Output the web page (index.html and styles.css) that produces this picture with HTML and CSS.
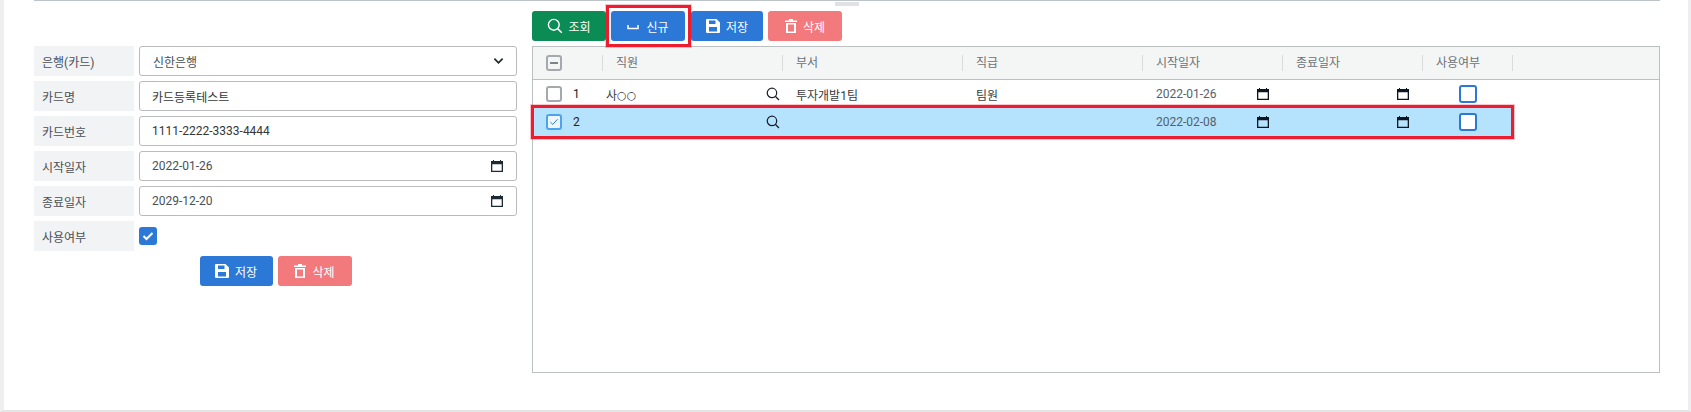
FILE: index.html
```html
<!DOCTYPE html>
<html lang="ko">
<head>
<meta charset="utf-8">
<title>카드등록</title>
<link rel="stylesheet" href="styles.css">
</head>
<body>
<svg class="sprites" aria-hidden="true">
  <symbol id="i-search" viewBox="0 0 16 16"><circle cx="6.800" cy="6.800" r="5.400" fill="none" stroke="currentColor" stroke-width="1.400"/><path d="M10.600 10.600 14.800 14.800" fill="none" stroke="currentColor" stroke-width="1.500"/></symbol>
  <symbol id="i-save" viewBox="0 0 14 14"><path fill="currentColor" fill-rule="evenodd" d="M1 0H10.500L14 3.500V13a1 1 0 0 1-1 1H1a1 1 0 0 1-1-1V1a1 1 0 0 1 1-1ZM3 1.500V5h6.500V1.500ZM3 8v4.500h8V8Z"/></symbol>
  <symbol id="i-trash" viewBox="0 0 12 14"><path fill="currentColor" fill-rule="evenodd" d="M4 0h4v1.500h4V3H0V1.500h4ZM1 4h10v10H1ZM3 5.500V12.500h6V5.500Z"/></symbol>
  <symbol id="i-cal" viewBox="0 0 12 12"><path fill="currentColor" fill-rule="evenodd" d="M2 0h1v1h6V0h1v1h2v11H0V1h2ZM1.300 4.200v6.500h9.400V4.200Z"/></symbol>
</svg>

<div class="page">
  <div class="top-rule"></div>
  <div class="splitter"></div>

  <div class="content">
    <section class="form">
      <div class="field"><div class="label">은행(카드)</div>
        <div class="control select"><span class="sel-text">신한은행</span>
          <svg class="chevron" viewBox="0 0 12 8"><path d="M1.500 1.500 6 6l4.500-4.500" fill="none" stroke="currentColor" stroke-width="1.800"/></svg>
        </div>
      </div>
      <div class="field"><div class="label">카드명</div><div class="control">카드등록테스트</div></div>
      <div class="field"><div class="label">카드번호</div><div class="control">1111-2222-3333-4444</div></div>
      <div class="field"><div class="label">시작일자</div><div class="control date"><span>2022-01-26</span><svg class="cal"><use href="#i-cal"/></svg></div></div>
      <div class="field"><div class="label">종료일자</div><div class="control date"><span>2029-12-20</span><svg class="cal"><use href="#i-cal"/></svg></div></div>
      <div class="field"><div class="label">사용여부</div>
        <div class="form-check"><svg viewBox="0 0 12 10"><path d="M1.500 5 4.500 8l6-6" fill="none" stroke="#fff" stroke-width="2"/></svg></div>
      </div>
      <div class="form-actions">
        <button class="btn blue"><svg class="ic-save"><use href="#i-save"/></svg>저장</button>
        <button class="btn pink wide"><svg class="ic-trash"><use href="#i-trash"/></svg>삭제</button>
      </div>
    </section>

    <section class="main">
      <div class="toolbar">
        <button class="btn green"><svg class="ic-search"><use href="#i-search"/></svg>조회</button>
        <button class="btn blue"><svg class="ic-new" viewBox="0 0 12 5"><path d="M1 0v3.500h10V0" fill="none" stroke="currentColor" stroke-width="1.500"/></svg>신규</button>
        <button class="btn blue"><svg class="ic-save"><use href="#i-save"/></svg>저장</button>
        <button class="btn pink"><svg class="ic-trash"><use href="#i-trash"/></svg>삭제</button>
      </div>
      <div class="grid">
        <div class="row head">
          <div class="cell c-sel"><span class="box minus"></span></div>
          <div class="cell">직원</div>
          <div class="cell">부서</div>
          <div class="cell">직급</div>
          <div class="cell">시작일자</div>
          <div class="cell">종료일자</div>
          <div class="cell">사용여부</div>
        </div>
        <div class="row data">
          <div class="cell c-sel"><span class="box"></span><span class="num">1</span></div>
          <div class="cell c-emp"><span>사<span class="masked">○○</span></span><svg class="lens"><use href="#i-search"/></svg></div>
          <div class="cell">투자개발1팀</div>
          <div class="cell">팀원</div>
          <div class="cell c-date"><span>2022-01-26</span><svg class="cal"><use href="#i-cal"/></svg></div>
          <div class="cell c-date end"><svg class="cal"><use href="#i-cal"/></svg></div>
          <div class="cell c-use"><span class="use-box"></span></div>
        </div>
        <div class="row data selected">
          <div class="cell c-sel"><span class="box checked"><svg viewBox="0 0 12 10"><path d="M1.500 5 4.500 8l6-6.500" fill="none" stroke="#2b78d6" stroke-width="1.200"/></svg></span><span class="num">2</span></div>
          <div class="cell c-emp"><span></span><svg class="lens"><use href="#i-search"/></svg></div>
          <div class="cell"></div>
          <div class="cell"></div>
          <div class="cell c-date"><span>2022-02-08</span><svg class="cal"><use href="#i-cal"/></svg></div>
          <div class="cell c-date end"><svg class="cal"><use href="#i-cal"/></svg></div>
          <div class="cell c-use"><span class="use-box"></span></div>
        </div>
      </div>
    </section>
  </div>

  <div class="mark mark-btn"></div>
  <div class="mark mark-row"></div>
</div>
</body>
</html>
```

FILE: styles.css
```css
* { box-sizing: border-box; }
html, body { margin: 0; height: 100%; }
body {
  background: #fff;
  font-family: Roboto, "Noto Sans CJK KR", sans-serif;
  font-size: 12px;
  color: #212529;
  overflow: hidden;
}
.sprites { position: absolute; width: 0; height: 0; }

.page {
  position: relative;
  width: 1691px;
  height: 412px;
  padding: 0 28px 0 30px;
  border-left: 4px solid #eeeeee;
  border-right: 3px solid #eeeef2;
  border-bottom: 2px solid #e4e4e4;
}
.top-rule { height: 1px; background: #bcc3c9; }
.splitter {
  position: absolute;
  top: 2px;
  left: 831px;
  width: 24px;
  height: 4px;
  background: #dfe1e4;
}

.content { display: flex; align-items: flex-start; gap: 15px; }

/* left form */
.form { width: 483px; padding-top: 45px; display: flex; flex-direction: column; gap: 5px; flex: none; }
.field { display: flex; gap: 5px; height: 30px; align-items: stretch; }
.label {
  width: 100px;
  background: #f2f3f5;
  color: #495057;
  padding-left: 8px;
  display: flex;
  align-items: center;
  flex: none;
}
.control {
  flex: 1;
  border: 1px solid #b9bbbe;
  border-radius: 3px;
  background: #fff;
  padding-left: 12px;
  display: flex;
  align-items: center;
  justify-content: space-between;
  color: #33363a;
}
.select { padding-right: 12px; color: #495057; }
.sel-text { padding-left: 1px; }
.chevron { width: 11px; height: 8px; color: #1d2327; }
.date { color: #495057; padding-right: 13px; }
.cal { width: 12px; height: 12px; color: #0c1620; display: block; flex: none; }
.date .cal { color: #1c2a38; }
.form-check {
  width: 18px;
  height: 18px;
  margin-top: 6px;
  background: #2b78d6;
  border-radius: 3px;
  display: flex;
  align-items: center;
  justify-content: center;
}
.form-check svg { width: 12px; height: 10px; }
.form-actions { display: flex; justify-content: center; gap: 5px; }

/* buttons */
.btn {
  height: 30px;
  width: 73px;
  border: 0;
  border-radius: 3px;
  color: #fff;
  font: inherit;
  padding: 0;
  display: flex;
  align-items: center;
  justify-content: center;
  gap: 6px;
}
.btn.wide { width: 74px; }
.green { background: #0b8c55; gap: 5px; }
.blue { background: #2b78d6; }
.pink { background: #f27a7d; }
.ic-search { width: 16px; height: 16px; }
.ic-save { width: 14px; height: 14px; }
.ic-trash { width: 12px; height: 14px; }
.ic-new { width: 12px; height: 5px; margin-top: 3px; }

/* right side */
.main { width: 1128px; flex: none; }
.toolbar { display: flex; gap: 5px; padding-top: 10px; height: 45px; }
.toolbar .btn:nth-child(1) { width: 74px; }
.toolbar .btn:nth-child(2) { width: 74px; gap: 7px; }
.toolbar .btn:nth-child(3) { width: 72px; margin-left: 1px; }
.toolbar .btn:nth-child(4) { width: 74px; }

.grid {
  height: 327px;
  border: 1px solid #bcc0c3;
}
.row {
  display: grid;
  grid-template-columns: 70px 180px 180px 180px 140px 140px 90px;
  width: 980px;
  align-items: center;
}
.head {
  width: auto;
  height: 33px;
  background: #f4f6f6;
  border-bottom: 1px solid #bcc0c3;
  color: #6c7278;
}
.head .cell {
  height: 16px;
  line-height: 16px;
  padding-left: 13px;
  border-right: 1px solid #d8dadc;
}
.head .cell.c-sel { padding-left: 13px; display: flex; align-items: center; }
.data { height: 28px; color: #383c41; }
.data .cell { padding-left: 13px; }
.data .c-sel { display: flex; align-items: center; gap: 11px; }
.num { color: #222; }
.c-emp { display: flex; align-items: center; justify-content: space-between; }
.data .c-emp { padding-left: 3px; padding-right: 3px; }
.masked { font-family: "DejaVu Sans", sans-serif; font-size: 11px; vertical-align: 1px; }
.lens { width: 14px; height: 14px; color: #17202a; display: block; }
.data .c-date { display: flex; align-items: center; justify-content: space-between; color: #56606a; padding-right: 14px; }
.data .c-date.end { justify-content: flex-end; }
.c-use { display: flex; }
.data .c-use { padding-left: 36px; }
.use-box {
  width: 18px;
  height: 18px;
  border: 2px solid #2b78d6;
  border-radius: 3px;
  background: #fff;
}
.selected { background: #b5e2fd; }

.box {
  width: 16px;
  height: 16px;
  border: 2px solid #a3a9ae;
  border-radius: 3px;
  background: #fff;
  display: flex;
  align-items: center;
  justify-content: center;
  flex: none;
}
.head .box { background: #f4f6f6; }
.minus::after { content: ""; width: 8px; height: 2px; background: #7c858d; }
.checked { border-color: #4da3ee; background: #eef7fe; }
.checked svg { width: 10px; height: 8px; }

/* red annotation outlines */
.mark { position: absolute; border: 3px solid #ed1c2e; box-shadow: 0 0 0 1px rgba(237, 28, 46, .25); }
.mark-btn { left: 602px; top: 5px; width: 85px; height: 42px; }
.mark-row { left: 527px; top: 105px; width: 983px; height: 34px; }
```
